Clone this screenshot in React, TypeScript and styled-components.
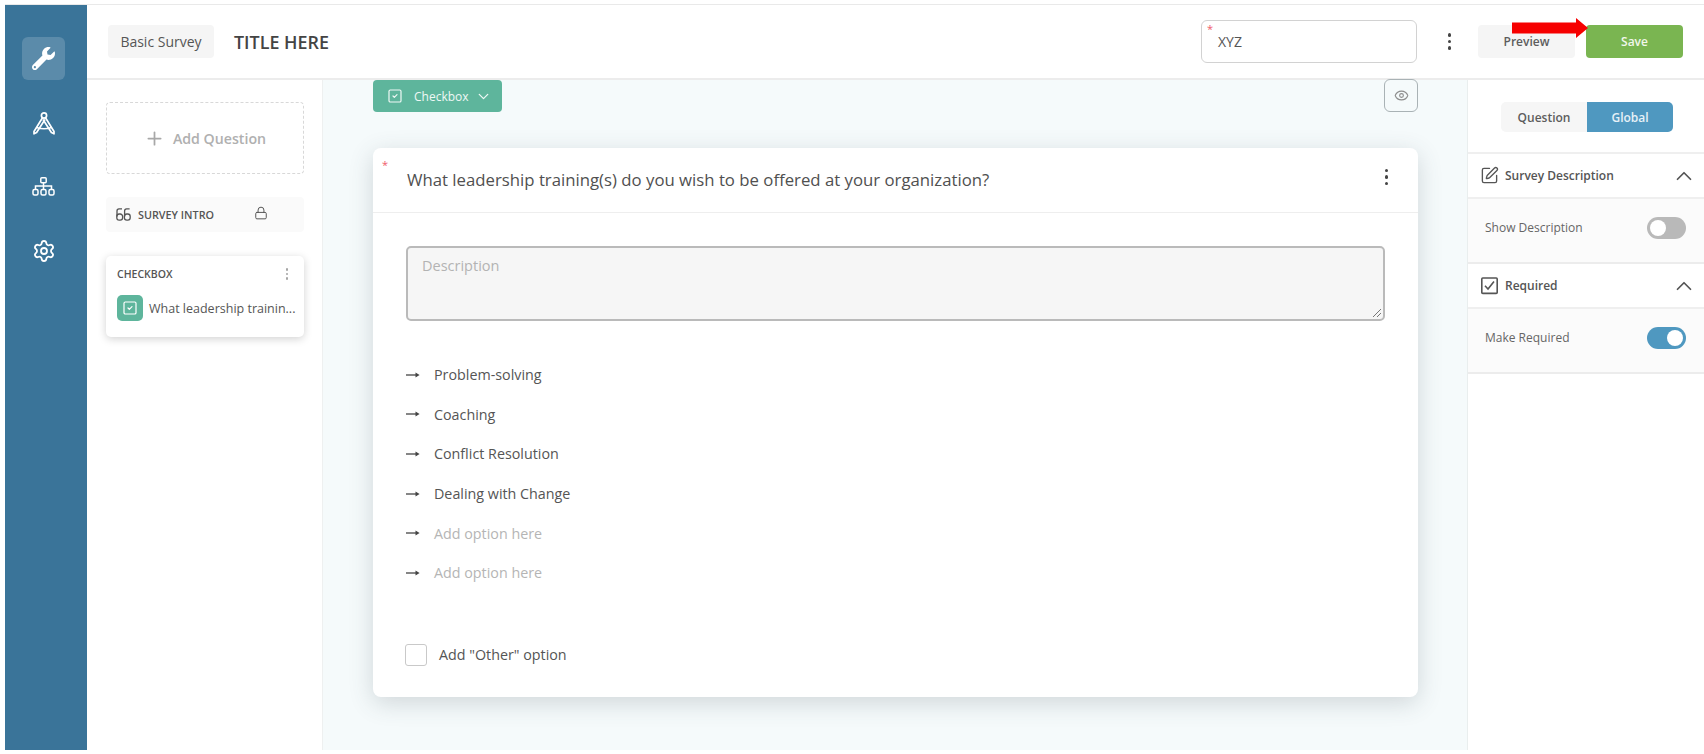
import styled, { createGlobalStyle } from 'styled-components';
import {
    ChevronDown,
    ChevronUp,
    Eye,
    Lock,
    Plus,
    Settings,
    SquareCheck,
    SquarePen,
} from 'lucide-react';
import { FaWrench } from 'react-icons/fa';

const GlobalStyle = createGlobalStyle`
    html, body {
        margin: 0;
        padding: 0;
        background: #fff;
        font-family: "Open Sans", "Liberation Sans", sans-serif;
        color: #555;
    }
    * {
        box-sizing: border-box;
    }
`;

const Page = styled.div`
    position: relative;
    width: 1704px;
    height: 754px;
    padding: 4px 0 4px 5px;
    overflow: hidden;
`;

const Frame = styled.div`
    display: flex;
    height: 100%;
    border-top: 1px solid #e9e9e9;
`;

const Rail = styled.nav`
    width: 82px;
    flex-shrink: 0;
    background: #3a7499;
    display: flex;
    flex-direction: column;
    align-items: center;
    padding: 32px 5px 0 0;
    gap: 21px;
    color: #fff;
`;

const RailButton = styled.div<{ $active?: boolean }>`
    width: 43px;
    height: 43px;
    border-radius: 6px;
    display: flex;
    align-items: center;
    justify-content: center;
    background: ${(p) => (p.$active ? 'rgba(255, 255, 255, 0.17)' : 'transparent')};
`;

const Content = styled.div`
    flex: 1;
    display: flex;
    flex-direction: column;
    min-width: 0;
`;

const Header = styled.header`
    height: 75px;
    flex-shrink: 0;
    display: flex;
    align-items: center;
    padding: 0 21px 0 21px;
    border-bottom: 2px solid #ececec;
    background: #fff;
`;

const TypeChip = styled.div`
    width: 106px;
    height: 33px;
    border-radius: 4px;
    background: #f5f5f5;
    font-size: 14px;
    display: flex;
    align-items: center;
    justify-content: center;
    margin-right: 20px;
`;

const Title = styled.h1`
    margin: 0;
    font-size: 17.9px;
    font-weight: 600;
    color: #444;
    flex: 1;
`;

const NameField = styled.div`
    position: relative;
    width: 216px;
    height: 43px;
    border: 1.5px solid #d2d2d2;
    border-radius: 6px;
    font-size: 14px;
    display: flex;
    align-items: center;
    padding-left: 16px;
    color: #555;
`;

const Star = styled.span`
    position: absolute;
    top: 2px;
    left: 5px;
    color: #ef5b6b;
    font-size: 11px;
    line-height: 1;
`;

const Dots = styled.div<{ $color?: string; $size?: number; $gap?: number }>`
    display: flex;
    flex-direction: column;
    gap: ${(p) => p.$gap ?? 3}px;
    span {
        width: ${(p) => p.$size ?? 3.5}px;
        height: ${(p) => p.$size ?? 3.5}px;
        border-radius: 50%;
        background: ${(p) => p.$color ?? '#444'};
    }
`;

const HeaderDots = styled.div`
    width: 61px;
    display: flex;
    justify-content: center;
    padding-left: 4px;
`;

const HeaderButton = styled.div<{ $primary?: boolean }>`
    width: 97px;
    height: 33px;
    border-radius: 4px;
    background: ${(p) => (p.$primary ? '#7ab551' : '#f5f5f5')};
    color: ${(p) => (p.$primary ? '#f1f7ea' : '#5d5d5d')};
    font-size: 12px;
    font-weight: 600;
    display: flex;
    align-items: center;
    justify-content: center;
    margin-left: ${(p) => (p.$primary ? '11px' : '0')};
`;

const RedArrow = styled.svg`
    position: absolute;
    left: 1512px;
    top: 18px;
`;

const Body = styled.div`
    flex: 1;
    display: flex;
    min-height: 0;
`;

const Outline = styled.aside`
    width: 236px;
    flex-shrink: 0;
    padding: 22px 18px 0 19px;
    border-right: 1.5px solid #eef0f0;
    background: #fff;
`;

const AddQuestion = styled.div`
    height: 72px;
    border: 1.5px dashed #d8d8d8;
    border-radius: 4px;
    display: flex;
    align-items: center;
    justify-content: center;
    gap: 8px;
    color: #b0b0b0;
    font-size: 14.2px;
    font-weight: 600;
`;

const IntroRow = styled.div`
    margin-top: 23px;
    height: 35px;
    border-radius: 4px;
    background: #fafafa;
    display: flex;
    align-items: center;
    padding: 0 10px;
    font-size: 10.8px;
    font-weight: 600;
    color: #555;
    gap: 7px;
`;

const LockSlot = styled.span`
    display: flex;
    margin-left: 33px;
    margin-top: -4px;
    color: #555;
`;

const QuestionCard = styled.div`
    margin-top: 24px;
    height: 81px;
    border-radius: 5px;
    background: #fff;
    box-shadow: 0 2px 8px rgba(0, 0, 0, 0.18);
    padding: 11px 10px 0 11px;
`;

const QuestionCardTop = styled.div`
    display: flex;
    justify-content: space-between;
    align-items: center;
    font-size: 10.5px;
    font-weight: 600;
    color: #555;
    padding-right: 6px;
`;

const QuestionCardRow = styled.div`
    margin-top: 14px;
    display: flex;
    align-items: center;
    gap: 6px;
    font-size: 12.5px;
    white-space: nowrap;
`;

const TypeBadge = styled.span`
    width: 26px;
    height: 26px;
    border-radius: 5px;
    background: #5eb59c;
    color: #fff;
    display: flex;
    align-items: center;
    justify-content: center;
    flex-shrink: 0;
`;

const Canvas = styled.main`
    flex: 1;
    min-width: 0;
    background: #f5fafb;
    padding: 0 49px 0 50px;
`;

const CanvasTop = styled.div`
    display: flex;
    justify-content: space-between;
    align-items: flex-start;
    height: 32px;
`;

const TypePill = styled.div`
    width: 129px;
    height: 32px;
    border-radius: 4px;
    background: #5eb59c;
    color: #eef8f5;
    font-size: 12px;
    display: flex;
    align-items: center;
    padding-left: 14px;
    gap: 11px;
`;

const PillChevron = styled(ChevronDown)`
    margin-left: -5px;
`;

const EyeButton = styled.div`
    width: 34px;
    height: 33px;
    margin-top: -1px;
    border: 1.5px solid #a9b2b5;
    border-radius: 6px;
    display: flex;
    align-items: center;
    justify-content: center;
    color: #8d8d8d;
`;

const Card = styled.section`
    position: relative;
    margin-top: 36px;
    height: 549px;
    border-radius: 8px;
    background: #fff;
    box-shadow: 0 6px 24px rgba(60, 75, 85, 0.2);
`;

const CardHead = styled.div`
    height: 65px;
    border-bottom: 1.5px solid #eeeeee;
    display: flex;
    align-items: center;
    justify-content: space-between;
    padding: 0 30px 1px 34px;
    font-size: 16.75px;
    color: #505050;
`;

const HeadDotsSlot = styled.span`
    margin-top: -5px;
`;

const CardBody = styled.div`
    padding: 33px 33px 0 33px;
`;

const Description = styled.div`
    position: relative;
    height: 75px;
    border: 2px solid #bababa;
    border-radius: 5px;
    background: #f6f6f6;
    padding: 8px 14px;
    font-size: 14.5px;
    color: #b3b3b3;
`;

const Grip = styled.svg`
    position: absolute;
    right: 1px;
    bottom: 1px;
`;

const Options = styled.ul`
    list-style: none;
    margin: 34px 0 0;
    padding: 0;
`;

const Option = styled.li<{ $empty?: boolean }>`
    height: 39.6px;
    display: flex;
    align-items: center;
    gap: 14px;
    font-size: 14.3px;
    color: ${(p) => (p.$empty ? '#b5b5b5' : '#555')};
`;

const OtherRow = styled.div`
    margin-top: 51px;
    margin-left: -1px;
    display: flex;
    align-items: center;
    gap: 12px;
    font-size: 14.3px;
    color: #555;
`;

const Tick = styled.span`
    width: 22px;
    height: 22px;
    border: 1.5px solid #c9c9c9;
    border-radius: 3px;
    background: #fff;
`;

const SettingsPanel = styled.aside`
    width: 237px;
    flex-shrink: 0;
    background: #fff;
    border-left: 1.5px solid #e9eeee;
`;

const TabsRow = styled.div`
    height: 74px;
    display: flex;
    justify-content: center;
    padding: 22px 0 0 2px;
    border-bottom: 2px solid #efefef;
`;

const Tab = styled.div<{ $active?: boolean }>`
    width: 86px;
    height: 30px;
    font-size: 12px;
    font-weight: 600;
    display: flex;
    align-items: center;
    justify-content: center;
    color: ${(p) => (p.$active ? '#e6f1f7' : '#5d5d5d')};
    background: ${(p) => (p.$active ? '#4f98c0' : '#f6f6f6')};
    border-radius: ${(p) => (p.$active ? '0 5px 5px 0' : '5px 0 0 5px')};
`;

const PanelHead = styled.div`
    height: 45px;
    display: flex;
    align-items: center;
    padding: 0 7px 0 12px;
    gap: 6px;
    font-size: 12px;
    font-weight: 600;
    color: #555;
    border-bottom: 2px solid #efefef;
`;

const PanelTitle = styled.span`
    flex: 1;
`;

const PanelBody = styled.div`
    height: 65px;
    background: #fbfbfb;
    display: flex;
    align-items: center;
    justify-content: space-between;
    padding: 0 18px 6px 17px;
    font-size: 12px;
    color: #666;
    border-bottom: 2px solid #ececec;
`;

const Toggle = styled.span<{ $on?: boolean }>`
    display: flex;
    width: 39px;
    height: 22px;
    border-radius: 11px;
    padding: 3px;
    background: ${(p) => (p.$on ? '#4f98c0' : '#b9b9b9')};
    justify-content: ${(p) => (p.$on ? 'flex-end' : 'flex-start')};
    &::after {
        content: '';
        width: 16px;
        height: 16px;
        border-radius: 50%;
        background: #fff;
    }
`;

const threeDots = [0, 1, 2];

const optionLabels = ['Problem-solving', 'Coaching', 'Conflict Resolution', 'Dealing with Change'];

function OptionArrow() {
    return (
        <svg width="14" height="8" viewBox="0 0 14 8" fill="none">
            <path d="M0 4h10" stroke="#444" strokeWidth="1.3" />
            <path d="M9.5 1.600 13.600 4 9.500 6.400z" fill="#444" />
        </svg>
    );
}

function CompassIcon() {
    return (
        <svg width="24" height="24" viewBox="0 0 24 24" fill="none" stroke="#fff" strokeWidth="1.7" strokeLinejoin="round">
            <circle cx="12" cy="4.500" r="2.600" />
            <path d="M10.500 6.800 2 20.500v2.300l2.600-1.300L13 8.500" />
            <path d="M13.500 6.800 22 20.500v2.300l-2.600-1.300L11 8.500" />
            <path d="M4.500 16.500c4.500 1.500 10.500 1.500 15 0" />
        </svg>
    );
}

function NetworkIcon() {
    return (
        <svg width="23" height="19" viewBox="0 0 23 19" fill="none" stroke="#fff" strokeWidth="1.500">
            <rect x="8.800" y="0.800" width="5.400" height="5" rx="1" />
            <path d="M11.500 5.800V12M3.500 12V9h16v3" />
            <rect x="1" y="12.500" width="5" height="5.500" rx="1.500" />
            <rect x="9" y="12.500" width="5" height="5.500" rx="1.500" />
            <rect x="17" y="12.500" width="5" height="5.500" rx="1.500" />
        </svg>
    );
}

function IntroIcon() {
    return (
        <svg width="15" height="13" viewBox="0 0 15 13" fill="none" stroke="#555" strokeWidth="1.300">
            <rect x="0.800" y="6" width="5.800" height="6.200" rx="2.400" />
            <rect x="8.400" y="6" width="5.800" height="6.200" rx="2.400" />
            <path d="M1 8.500V3c0-1.300.8-2.200 2-2.200h3M8.600 8.500V3c0-1.300.8-2.200 2-2.200h3" />
        </svg>
    );
}

function RequiredIcon() {
    return (
        <svg width="19" height="19" viewBox="0 0 19 19" fill="none" stroke="#555">
            <rect x="1.800" y="2" width="15.400" height="15.400" rx="1" strokeWidth="1.600" />
            <path d="M5 9.800 8 13l6-7.500" strokeWidth="1.600" />
        </svg>
    );
}

function DotColumn(props: { color?: string; size?: number; gap?: number }) {
    return (
        <Dots $color={props.color} $size={props.size} $gap={props.gap}>
            {threeDots.map((d) => (
                <span key={d} />
            ))}
        </Dots>
    );
}

export default function App() {
    return (
        <Page>
            <GlobalStyle />
            <Frame>
                <Rail>
                    <RailButton $active>
                        <FaWrench size={23} />
                    </RailButton>
                    <RailButton>
                        <CompassIcon />
                    </RailButton>
                    <RailButton>
                        <NetworkIcon />
                    </RailButton>
                    <RailButton>
                        <Settings size={24} strokeWidth={1.8} />
                    </RailButton>
                </Rail>
                <Content>
                    <Header>
                        <TypeChip>Basic Survey</TypeChip>
                        <Title>TITLE HERE</Title>
                        <NameField>
                            <Star>*</Star>
                            XYZ
                        </NameField>
                        <HeaderDots>
                            <DotColumn />
                        </HeaderDots>
                        <HeaderButton>Preview</HeaderButton>
                        <HeaderButton $primary>Save</HeaderButton>
                    </Header>
                    <Body>
                        <Outline>
                            <AddQuestion>
                                <Plus size={21} strokeWidth={2} color="#a8a8a8" />
                                Add Question
                            </AddQuestion>
                            <IntroRow>
                                <IntroIcon />
                                SURVEY INTRO
                                <LockSlot>
                                    <Lock size={14} strokeWidth={1.7} />
                                </LockSlot>
                            </IntroRow>
                            <QuestionCard>
                                <QuestionCardTop>
                                    CHECKBOX
                                    <DotColumn color="#a5a5a5" size={2.5} gap={2} />
                                </QuestionCardTop>
                                <QuestionCardRow>
                                    <TypeBadge>
                                        <SquareCheck size={16} strokeWidth={1.8} />
                                    </TypeBadge>
                                    What leadership trainin...
                                </QuestionCardRow>
                            </QuestionCard>
                        </Outline>
                        <Canvas>
                            <CanvasTop>
                                <TypePill>
                                    <SquareCheck size={16} strokeWidth={1.8} />
                                    Checkbox
                                    <PillChevron size={17} strokeWidth={1.8} />
                                </TypePill>
                                <EyeButton>
                                    <Eye size={15} strokeWidth={1.8} />
                                </EyeButton>
                            </CanvasTop>
                            <Card>
                                <Star style={{ top: 11, left: 9 }}>*</Star>
                                <CardHead>
                                    What leadership training(s) do you wish to be offered at your organization?
                                    <HeadDotsSlot>
                                        <DotColumn gap={3} />
                                    </HeadDotsSlot>
                                </CardHead>
                                <CardBody>
                                    <Description>
                                        Description
                                        <Grip width="10" height="10" viewBox="0 0 10 10" stroke="#777" strokeWidth="1">
                                            <path d="M1 9 9 1M5 9l4-4" />
                                        </Grip>
                                    </Description>
                                    <Options>
                                        {optionLabels.map((label) => (
                                            <Option key={label}>
                                                <OptionArrow />
                                                {label}
                                            </Option>
                                        ))}
                                        <Option $empty>
                                            <OptionArrow />
                                            Add option here
                                        </Option>
                                        <Option $empty>
                                            <OptionArrow />
                                            Add option here
                                        </Option>
                                    </Options>
                                    <OtherRow>
                                        <Tick />
                                        Add "Other" option
                                    </OtherRow>
                                </CardBody>
                            </Card>
                        </Canvas>
                        <SettingsPanel>
                            <TabsRow>
                                <Tab>Question</Tab>
                                <Tab $active>Global</Tab>
                            </TabsRow>
                            <PanelHead>
                                <SquarePen size={19} strokeWidth={1.7} />
                                <PanelTitle>Survey Description</PanelTitle>
                                <ChevronUp size={26} strokeWidth={1.6} />
                            </PanelHead>
                            <PanelBody>
                                Show Description
                                <Toggle />
                            </PanelBody>
                            <PanelHead>
                                <RequiredIcon />
                                <PanelTitle>Required</PanelTitle>
                                <ChevronUp size={26} strokeWidth={1.6} />
                            </PanelHead>
                            <PanelBody>
                                Make Required
                                <Toggle $on />
                            </PanelBody>
                        </SettingsPanel>
                    </Body>
                </Content>
            </Frame>
            <RedArrow width="76" height="20" viewBox="0 0 76 20">
                <path d="M0 4.500h64V0l12 10-12 10v-4.500H0z" fill="#f60000" />
            </RedArrow>
        </Page>
    );
}
